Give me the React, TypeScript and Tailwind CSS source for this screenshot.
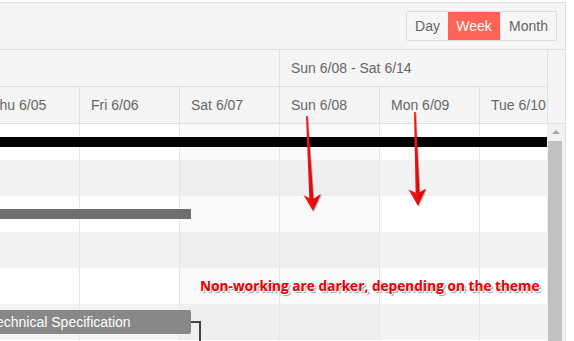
import React from 'react';

type Row = { alt: boolean };

const days = ['Thu 6/05', 'Fri 6/06', 'Sat 6/07', 'Sun 6/08', 'Mon 6/09', 'Tue 6/10'];
const nonWorking = [false, false, true, true, false, false];
const rows: Row[] = [
  { alt: false },
  { alt: true },
  { alt: false },
  { alt: true },
  { alt: false },
  { alt: true },
];

function cellBg(alt: boolean, off: boolean) {
  if (alt) return off ? 'bg-[#efefef]' : 'bg-[#f3f3f3]';
  return off ? 'bg-[#fafafa]' : 'bg-white';
}

function Arrows() {
  return (
    <svg
      className="pointer-events-none absolute left-0 top-0"
      width={574}
      height={341}
      viewBox="0 0 574 341"
    >
      <defs>
        <linearGradient id="arrowFill" x1="0" x2="1" y1="0" y2="0">
          <stop offset="0" stopColor="#ff1a1a" />
          <stop offset="1" stopColor="#d60000" />
        </linearGradient>
      </defs>
      <g fill="url(#arrowFill)" style={{ filter: 'drop-shadow(1px 1px 0.6px rgba(0,0,0,0.25))' }}>
        <polygon points="306,116 307.6,116 313.6,201 309.4,201" />
        <polygon points="303.5,195 312.2,199.5 321,194 313,211" />
        <polygon points="414,112 415.6,112 419.6,193 415.6,193" />
        <polygon points="408.5,189.5 417.6,193.5 426,188.5 418,206" />
      </g>
    </svg>
  );
}

export default function App() {
  return (
    <div className="relative h-[341px] w-[574px] overflow-hidden bg-white pt-[2px] font-['Liberation_Sans',Arial,sans-serif]">
      <div className="w-[566px] border-r border-t border-[#e0e0e0]">
        {/* toolbar */}
        <div className="flex h-[47px] justify-end border-b border-[#e0e0e0] bg-[#f5f5f5] pr-[8px] pt-[8px]">
          <div className="flex h-[30px] overflow-hidden rounded-[2px] border border-[#dcdcdc] text-[14px]">
            <div className="flex w-[41px] items-center justify-center bg-[#f6f6f6] text-[#656565]">Day</div>
            <div className="flex w-[52px] items-center justify-center bg-[#ff6358] text-white">Week</div>
            <div className="flex w-[56px] items-center justify-center border-l border-[#e4e4e4] bg-[#f6f6f6] text-[#656565]">
              Month
            </div>
          </div>
        </div>

        {/* header */}
        <div className="flex border-b border-[#e0e0e0] bg-[#f5f5f5] text-[14px] text-[#666]">
          <div className="w-[547px] overflow-hidden">
            <div className="flex h-[37px] border-b border-[#e0e0e0]">
              <div className="w-[280px] shrink-0 border-r border-[#e0e0e0]" />
              <div className="flex w-[320px] shrink-0 items-center pl-[11px]">Sun 6/08 - Sat 6/14</div>
            </div>
            <div className="-ml-[20px] flex h-[36px]">
              {days.map((d) => (
                <div
                  key={d}
                  className="flex w-[100px] shrink-0 items-center border-r border-[#e0e0e0] pl-[11px]"
                >
                  {d}
                </div>
              ))}
            </div>
          </div>
          <div className="w-[18px] border-l border-[#e0e0e0]" />
        </div>

        {/* body */}
        <div className="flex h-[230px]">
          <div className="w-[547px] overflow-hidden">
            {rows.map((row, i) => (
              <div key={i} className="relative h-[36px]">
                <div className="-ml-[20px] flex h-full">
                  {days.map((d, j) => (
                    <div
                      key={d}
                      className={`h-full w-[100px] shrink-0 border-r border-[#e6e6e6] ${cellBg(row.alt, nonWorking[j])}`}
                    />
                  ))}
                </div>
                {i === 0 && <div className="absolute left-0 top-[13px] h-[10px] w-[547px] bg-black" />}
                {i === 2 && <div className="absolute left-0 top-[13px] h-[10px] w-[191px] bg-[#6f6f6f]" />}
                {i === 4 && (
                  <div className="absolute left-[200px] top-[8px] whitespace-nowrap font-['Open_Sans',sans-serif] text-[13.7px] font-bold leading-[20px] text-[#e8000b] [text-shadow:1px_1px_0_#fff,2px_2px_1px_#9a9a9a]">
                    Non-working are darker, depending on the theme
                  </div>
                )}
                {i === 5 && (
                  <>
                    <div className="absolute -left-[40px] top-[6px] flex h-[24px] w-[231px] items-center rounded-[2px] bg-[#888] pl-[29px] text-[14px] text-white">
                      Technical Specification
                    </div>
                    <div className="absolute left-[191px] top-[17px] h-[2px] w-[10px] bg-[#444]" />
                    <div className="absolute left-[199px] top-[17px] h-[30px] w-[2px] bg-[#444]" />
                  </>
                )}
              </div>
            ))}
          </div>
          <div className="relative w-[18px] bg-[#f1f1f1]">
            <div className="absolute left-[5px] top-[6px] h-0 w-0 border-x-[4px] border-b-[4px] border-x-transparent border-b-[#a3a3a3]" />
            <div className="absolute left-[1px] top-[17px] h-[220px] w-[14px] bg-[#c1c1c1]" />
          </div>
        </div>
      </div>
      <Arrows />
    </div>
  );
}
